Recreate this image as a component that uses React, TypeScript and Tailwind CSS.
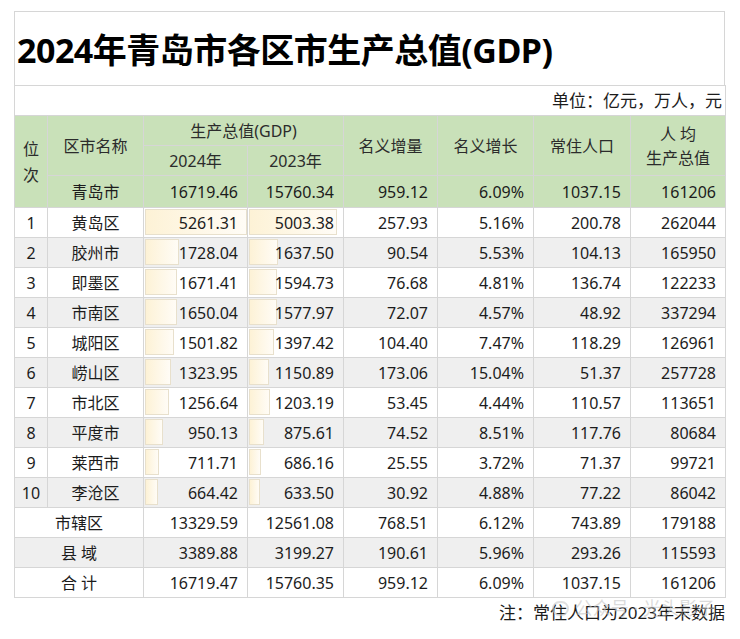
import React from "react"

type Row = {
  rank?: string
  name: string
  g24: number
  g23: number
  inc: string
  rate: string
  pop: string
  per: string
}

const rows: Row[] = [
  { rank: "1", name: "黄岛区", g24: 5261.31, g23: 5003.38, inc: "257.93", rate: "5.16%", pop: "200.78", per: "262044" },
  { rank: "2", name: "胶州市", g24: 1728.04, g23: 1637.5, inc: "90.54", rate: "5.53%", pop: "104.13", per: "165950" },
  { rank: "3", name: "即墨区", g24: 1671.41, g23: 1594.73, inc: "76.68", rate: "4.81%", pop: "136.74", per: "122233" },
  { rank: "4", name: "市南区", g24: 1650.04, g23: 1577.97, inc: "72.07", rate: "4.57%", pop: "48.92", per: "337294" },
  { rank: "5", name: "城阳区", g24: 1501.82, g23: 1397.42, inc: "104.40", rate: "7.47%", pop: "118.29", per: "126961" },
  { rank: "6", name: "崂山区", g24: 1323.95, g23: 1150.89, inc: "173.06", rate: "15.04%", pop: "51.37", per: "257728" },
  { rank: "7", name: "市北区", g24: 1256.64, g23: 1203.19, inc: "53.45", rate: "4.44%", pop: "110.57", per: "113651" },
  { rank: "8", name: "平度市", g24: 950.13, g23: 875.61, inc: "74.52", rate: "8.51%", pop: "117.76", per: "80684" },
  { rank: "9", name: "莱西市", g24: 711.71, g23: 686.16, inc: "25.55", rate: "3.72%", pop: "71.37", per: "99721" },
  { rank: "10", name: "李沧区", g24: 664.42, g23: 633.5, inc: "30.92", rate: "4.88%", pop: "77.22", per: "86042" },
]

const totals: Row[] = [
  { name: "市辖区", g24: 13329.59, g23: 12561.08, inc: "768.51", rate: "6.12%", pop: "743.89", per: "179188" },
  { name: "县 域", g24: 3389.88, g23: 3199.27, inc: "190.61", rate: "5.96%", pop: "293.26", per: "115593" },
  { name: "合 计", g24: 16719.47, g23: 15760.35, inc: "959.12", rate: "6.09%", pop: "1037.15", per: "161206" },
]

const font = { fontFamily: '"Noto Sans", "Noto Sans CJK SC", sans-serif' }

// excel-style data bar behind the GDP numbers
const Bar = ({ value, max, full }: { value: number; max: number; full: number }) => (
  <div
    className="absolute left-[1px] top-[1px] bottom-[2px] border border-[#e8e0cc] bg-gradient-to-r from-[#fdf2d6] to-[#fffcf6]"
    style={{ width: Math.round((value / max) * full) }}
  />
)

const td = "border border-[#d6d6d6] px-[9px] text-right"

export default function App() {
  return (
    <div className="min-h-[639px] bg-white pt-[11px] pl-[14px] text-[16px] text-[#1c1c1c]" style={font}>
      <div className="w-[711px]">
        <div className="flex h-[74px] items-center border border-b-0 border-[#d6d6d6] pl-[2px] pt-[4px]">
          <h1 className="text-[34px] font-bold tracking-[-0.5px] text-black">
            2024年青岛市各区市生产总值(GDP)
          </h1>
        </div>
        <table className="w-[711px] table-fixed border-collapse">
          <colgroup>
            <col className="w-[33px]" />
            <col className="w-[96px]" />
            <col className="w-[104px]" />
            <col className="w-[96px]" />
            <col className="w-[94px]" />
            <col className="w-[96px]" />
            <col className="w-[97px]" />
            <col className="w-[95px]" />
          </colgroup>
          <tbody>
            <tr className="h-[30px]">
              <td colSpan={8} className="border border-[#d6d6d6] pr-[3px] text-right text-[17px]">
                单位：亿元，万人，元
              </td>
            </tr>
            <tr className="h-[30px] bg-[#c9e1b9] text-[#2b2b2b]">
              <td rowSpan={3} className="border border-[#d6d6d6] text-center leading-[26px]">
                位<br />次
              </td>
              <td rowSpan={2} className="border border-[#d6d6d6] text-center">区市名称</td>
              <td colSpan={2} className="border border-[#d6d6d6] text-center">生产总值(GDP)</td>
              <td rowSpan={2} className="border border-[#d6d6d6] text-center">名义增量</td>
              <td rowSpan={2} className="border border-[#d6d6d6] text-center">名义增长</td>
              <td rowSpan={2} className="border border-[#d6d6d6] text-center">常住人口</td>
              <td rowSpan={2} className="border border-[#d6d6d6] text-center leading-[24px]">
                人 均<br />生产总值
              </td>
            </tr>
            <tr className="h-[30px] bg-[#c9e1b9] text-[#2b2b2b]">
              <td className="border border-[#d6d6d6] text-center">2024年</td>
              <td className="border border-[#d6d6d6] text-center">2023年</td>
            </tr>
            <tr className="h-[32px] bg-[#c9e1b9]">
              <td className="border border-[#d6d6d6] text-center">青岛市</td>
              <td className={td}>16719.46</td>
              <td className={td}>15760.34</td>
              <td className={td}>959.12</td>
              <td className={td}>6.09%</td>
              <td className={td}>1037.15</td>
              <td className={td}>161206</td>
            </tr>
            {rows.map((r, i) => (
              <tr key={r.name} className={i % 2 === 0 ? "h-[30px] bg-white" : "h-[30px] bg-[#efefef]"}>
                <td className="border border-[#d6d6d6] text-center">{r.rank}</td>
                <td className="border border-[#d6d6d6] text-center">{r.name}</td>
                <td className={td + " relative"}>
                  <Bar value={r.g24} max={5261.31} full={102} />
                  <span className="relative">{r.g24.toFixed(2)}</span>
                </td>
                <td className={td + " relative"}>
                  <Bar value={r.g23} max={5003.38} full={88} />
                  <span className="relative">{r.g23.toFixed(2)}</span>
                </td>
                <td className={td}>{r.inc}</td>
                <td className={td}>{r.rate}</td>
                <td className={td}>{r.pop}</td>
                <td className={td}>{r.per}</td>
              </tr>
            ))}
            {totals.map((r, i) => (
              <tr key={r.name} className={i % 2 === 0 ? "h-[30px] bg-white" : "h-[30px] bg-[#efefef]"}>
                <td colSpan={2} className="border border-[#d6d6d6] text-center">{r.name}</td>
                <td className={td}>{r.g24.toFixed(2)}</td>
                <td className={td}>{r.g23.toFixed(2)}</td>
                <td className={td}>{r.inc}</td>
                <td className={td}>{r.rate}</td>
                <td className={td}>{r.pop}</td>
                <td className={td}>{r.per}</td>
              </tr>
            ))}
          </tbody>
        </table>
        <div className="relative mt-[2px] text-right text-[17px] text-[#1c1c1c]">
          注：常住人口为2023年末数据
          <div className="absolute right-[10px] top-[-5px] flex items-center gap-[6px] text-[18px] text-[#c4c4c4]/60">
            <span className="h-[15px] w-[17px] rounded-full border-2 border-[#cccccc]/60" />
            公众号 · 光头影子
          </div>
        </div>
      </div>
    </div>
  )
}
